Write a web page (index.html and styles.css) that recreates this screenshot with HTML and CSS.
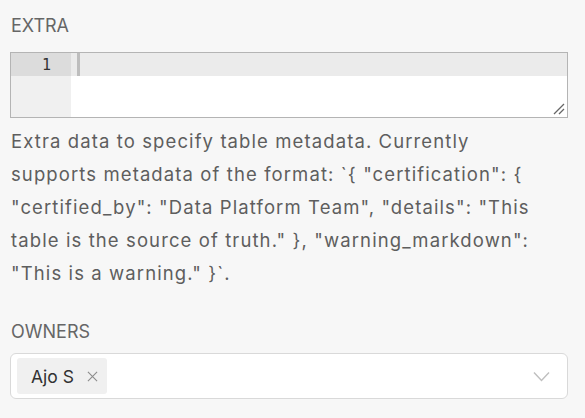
FILE: index.html
```html
<!DOCTYPE html>
<html>
<head>
<meta charset="utf-8">
<link rel="stylesheet" href="styles.css">
</head>
<body>
<div class="form">
  <div class="field">
    <div class="label">EXTRA</div>
    <div class="editor">
      <div class="gutter">
        <div class="gutter-active">1</div>
      </div>
      <div class="content">
        <div class="active-line"><span class="cursor"></span></div>
      </div>
      <svg class="resize" width="12" height="12" viewBox="0 0 12 12">
        <path d="M1 11 L11 1 M6 11 L11 6" stroke="#666" stroke-width="1.3" fill="none"/>
      </svg>
    </div>
    <div class="help">Extra data to specify table metadata. Currently supports metadata of the format: `{ "certification": { "certified_by": "Data Platform Team", "details": "This table is the source of truth." }, "warning_markdown": "This is a warning." }`.</div>
  </div>
  <div class="field owners">
    <div class="label">OWNERS</div>
    <div class="select">
      <div class="tags">
        <span class="tag">Ajo S
          <svg class="tag-x" width="12" height="12" viewBox="0 0 12 12"><path d="M1 1 L11 11 M11 1 L1 11" stroke="#8c8c8c" stroke-width="1.2" fill="none"/></svg>
        </span>
      </div>
      <svg class="chevron" width="17" height="11" viewBox="0 0 17 11"><path d="M1 1.5 L8.5 9.5 L16 1.5" stroke="#bfbfbf" stroke-width="1.4" fill="none"/></svg>
    </div>
  </div>
</div>
</body>
</html>
```

FILE: styles.css
```css
html, body {
  margin: 0;
  padding: 0;
  background: #f7f7f7;
}
body {
  font-family: "Inter", "Noto Sans", sans-serif;
  color: #666666;
}
.form {
  padding: 12px 17px 0 10px;
}
.label {
  font-size: 18px;
  line-height: 27px;
  color: #666666;
  padding-left: 1px;
}
.editor {
  margin-top: 13px;
  position: relative;
  display: flex;
  height: 64px;
  border: 1px solid #b4b4b4;
  background: #ffffff;
}
.gutter {
  width: 60px;
  background: #f0f0f0;
}
.gutter-active {
  height: 23px;
  background: #dcdcdc;
  font-family: "DejaVu Sans Mono", monospace;
  font-size: 15px;
  line-height: 24px;
  color: #333333;
  text-align: right;
  padding-right: 20px;
}
.content {
  flex: 1;
}
.active-line {
  height: 23px;
  background: #ebebeb;
  padding-left: 6px;
  display: flex;
}
.cursor {
  width: 3px;
  height: 23px;
  background: #bdbdbd;
}
.resize {
  position: absolute;
  right: 2px;
  bottom: 2px;
}
.help {
  margin-top: 7px;
  font-size: 18.5px;
  letter-spacing: 1.1px;
  line-height: 33px;
  color: #5e5e5e;
  padding: 0 18px 0 1px;
}
.owners {
  margin-top: 28px;
}
.owners .select {
  margin-top: 8px;
}
.select {
  height: 44px;
  border: 1px solid #d9d9d9;
  border-radius: 6px;
  background: #ffffff;
  display: flex;
  align-items: center;
  padding: 0 17px 0 6px;
}
.tags {
  flex: 1;
  display: flex;
}
.tag {
  display: inline-flex;
  align-items: center;
  height: 36px;
  padding: 0 9px 0 14px;
  background: #f0f0f0;
  border-radius: 3px;
  font-size: 17.5px;
  color: #323232;
  gap: 13px;
}
.tag-x {
  width: 11px;
  height: 11px;
}
.chevron {
  display: block;
}
```
